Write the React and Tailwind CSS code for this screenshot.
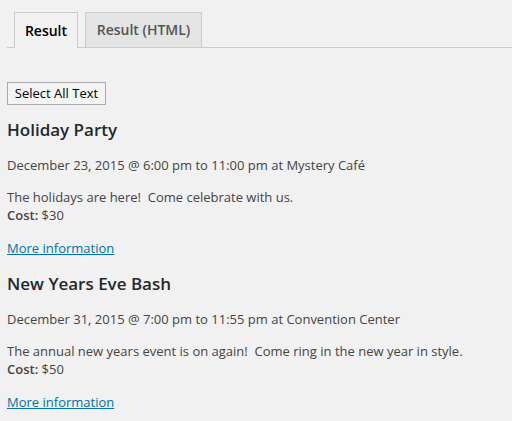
import React from "react";

const events = [
  {
    title: "Holiday Party",
    when: "December 23, 2015 @ 6:00 pm to 11:00 pm at Mystery Café",
    desc: "The holidays are here!\u00a0 Come celebrate with us.",
    cost: "$30",
  },
  {
    title: "New Years Eve Bash",
    when: "December 31, 2015 @ 7:00 pm to 11:55 pm at Convention Center",
    desc: "The annual new years event is on again!\u00a0 Come ring in the new year in style.",
    cost: "$50",
  },
];

const App = () => {
  return (
    <div className="min-h-[421px] w-[512px] bg-[#f1f1f1] text-[#444] font-['Open_Sans',sans-serif] text-[13px] leading-[18px] pt-[12px]">
      {/* tabs */}
      <div className="ml-[7px] flex items-end border-b border-[#ccc] pl-[7px] gap-[7px]">
        <div className="-mb-px h-[36px] w-[64px] border border-b-0 border-[#ccc] bg-[#f1f1f1] flex items-center justify-center text-[14px] font-semibold text-black">
          Result
        </div>
        <div className="h-[35px] w-[117px] border border-b-0 border-[#ccc] bg-[#e4e4e4] flex items-center justify-center text-[14px] font-semibold text-[#555]">
          Result (HTML)
        </div>
      </div>

      <div className="px-[7px] pt-[34px]">
        <button className="h-[23px] w-[99px] border border-[#aaa] bg-[#f4f4f4] text-black text-[13px] leading-none">
          Select All Text
        </button>

        {events.map((ev) => (
          <div key={ev.title} className="mt-[15px] first-of-type:mt-[13px]">
            <h2 className="text-[17px] leading-[24px] font-semibold text-[#23282d]">
              {ev.title}
            </h2>
            <p className="mt-[14px]">{ev.when}</p>
            <p className="mt-[14px]">{ev.desc}</p>
            <p>
              <strong className="font-semibold">Cost:</strong> {ev.cost}
            </p>
            <p className="mt-[15px]">
              <a href="#" className="text-[#0073aa] underline">
                More information
              </a>
            </p>
          </div>
        ))}
      </div>
    </div>
  );
};

export default App;
